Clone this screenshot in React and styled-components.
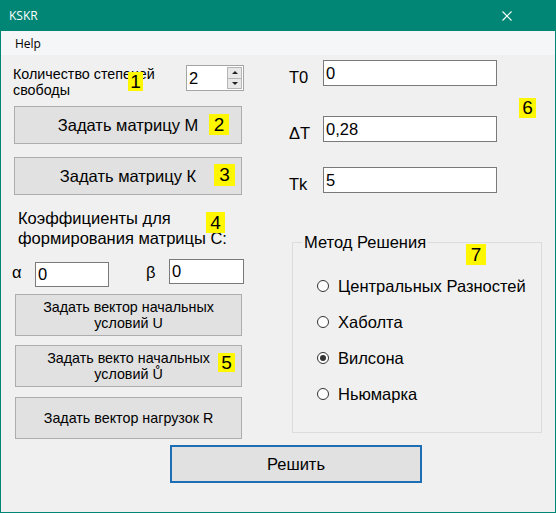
import React from 'react';
import styled, { createGlobalStyle } from 'styled-components';

const GlobalStyle = createGlobalStyle`
  html, body { margin: 0; padding: 0; background: #f0f0f0; }
  body { font-family: "Liberation Sans", Arial, sans-serif; color: #000; }
`;

const Window = styled.div`
  position: relative;
  width: 556px;
  height: 513px;
  box-sizing: border-box;
  border: 1px solid #018574;
  border-top: none;
  background: #f0f0f0;
  display: flex;
  flex-direction: column;
  overflow: hidden;
`;

const TitleBar = styled.div`
  height: 31px;
  flex: none;
  background: #018574;
  color: #fff;
  display: flex;
  align-items: center;
  justify-content: space-between;
  padding: 0 43px 0 8px;
  font-family: "Open Sans", "Noto Sans", sans-serif;
  font-size: 12px;
`;

const MenuBar = styled.div`
  height: 24px;
  flex: none;
  background: #f5f6f7;
  display: flex;
  align-items: center;
  padding-left: 14px;
  font-family: "Open Sans", "Noto Sans", sans-serif;
  font-size: 12px;
`;

const Body = styled.div`
  display: grid;
  grid-template-columns: 232px 253px;
  column-gap: 45px;
  align-items: start;
  padding-left: 11px;
`;

const Column = styled.div`
  display: flex;
  flex-direction: column;
  align-items: flex-start;
`;

const DofRow = styled.div`
  display: flex;
  align-items: flex-start;
  margin-top: 10px;
`;

const SmallLabel = styled.div`
  width: 173px;
  margin: 1px 0 0 1px;
  font-size: 14.3px;
  line-height: 16px;
  white-space: nowrap;
`;

const Spin = styled.div`
  width: 58px;
  height: 26px;
  box-sizing: border-box;
  border: 1px solid #a5a5a5;
  background: #fff;
  display: flex;
  font-size: 16.5px;
`;

const SpinValue = styled.div`
  flex: 1;
  padding: 3px 0 0 2px;
`;

const SpinButtons = styled.div`
  width: 15px;
  display: flex;
  flex-direction: column;
  margin: 1px 1px 1px 0;
`;

const SpinHalf = styled.div`
  flex: 1;
  background: #e8e8e8;
  border: 1px solid #b5b5b5;
  ${p => p.$down ? 'border-top: none;' : ''}
  display: flex;
  align-items: center;
  justify-content: center;
  &::after {
    content: '';
    border-left: 3px solid transparent;
    border-right: 3px solid transparent;
    ${p => p.$down ? 'border-top: 3px solid #222;' : 'border-bottom: 3px solid #222;'}
  }
`;

const ActionButton = styled.button`
  width: ${p => p.$w}px;
  height: ${p => p.$h}px;
  margin: ${p => p.$mt}px 0 0 ${p => p.$ml}px;
  box-sizing: border-box;
  border: 1px solid #adadad;
  background: #e1e1e1;
  color: #000;
  font-family: inherit;
  font-size: ${p => p.$small ? 14.3 : 16.5}px;
  line-height: ${p => p.$small ? 16 : 20}px;
  padding: 0;
  display: flex;
  align-items: center;
  justify-content: center;
  text-align: center;
`;

const BigLabel = styled.div`
  margin: 13px 0 0 6px;
  font-size: 16.5px;
  line-height: 20px;
  white-space: nowrap;
`;

const CoefRow = styled.div`
  display: flex;
  align-items: flex-start;
  margin-top: 11px;
`;

const Greek = styled.div`
  width: 23px;
  margin: 3px 0 0 ${p => p.$ml}px;
  font-size: 16.5px;
  line-height: 20px;
`;

const TextBox = styled.input`
  width: ${p => p.$w}px;
  height: ${p => p.$h}px;
  margin-top: ${p => p.$mt || 0}px;
  box-sizing: border-box;
  border: 1px solid #7a7a7a;
  background: #fff;
  padding: 0 2px;
  font-family: inherit;
  font-size: 16.5px;
  color: #000;
  outline: none;
`;

const FieldRow = styled.div`
  display: flex;
  align-items: flex-start;
  margin-top: ${p => p.$mt}px;
`;

const FieldLabel = styled.div`
  width: 34px;
  padding-top: 8px;
  font-size: 16.5px;
  line-height: 18px;
`;

const Group = styled.fieldset`
  width: 250px;
  box-sizing: border-box;
  margin: 39px 0 0 3px;
  padding: 0 0 28px 0;
  border: 1px solid #dcdcdc;
`;

const GroupTitle = styled.legend`
  margin-left: 9px;
  padding: 0 2px;
  font-size: 16.5px;
  line-height: 20px;
`;

const RadioList = styled.div`
  display: flex;
  flex-direction: column;
  gap: 16px;
  margin-top: 24px;
  padding-left: 24px;
`;

const RadioRow = styled.label`
  display: flex;
  align-items: center;
  gap: 9px;
  height: 20px;
  font-size: 16.5px;
  white-space: nowrap;
`;

const RadioDot = styled.span`
  width: 12px;
  height: 12px;
  flex: none;
  box-sizing: border-box;
  border-radius: 50%;
  border: 1px solid #333;
  background: #fff;
  display: flex;
  align-items: center;
  justify-content: center;
  &::after {
    content: '';
    width: 6px;
    height: 6px;
    border-radius: 50%;
    background: ${p => p.$on ? '#333' : 'transparent'};
  }
`;

const SolveButton = styled.button`
  grid-column: 1 / -1;
  width: 252px;
  height: 38px;
  margin: 6px 0 0 158px;
  box-sizing: border-box;
  border: 2px solid #1e6eb4;
  background: #e1e1e1;
  color: #000;
  font-family: inherit;
  font-size: 16.5px;
  padding: 0;
`;

const Note = styled.span`
  position: absolute;
  left: ${p => p.$x - 1}px;
  top: ${p => p.$y}px;
  width: ${p => p.$w}px;
  height: ${p => p.$h}px;
  background: #fff700;
  font-size: 19px;
  line-height: ${p => p.$h}px;
  text-align: center;
`;

const notes = [
  { n: 1, x: 128, y: 72, w: 15, h: 19 },
  { n: 2, x: 209, y: 114, w: 20, h: 21 },
  { n: 3, x: 214, y: 164, w: 21, h: 22 },
  { n: 4, x: 206, y: 212, w: 19, h: 21 },
  { n: 5, x: 218, y: 353, w: 17, h: 19 },
  { n: 6, x: 519, y: 98, w: 17, h: 20 },
  { n: 7, x: 466, y: 244, w: 20, h: 21 },
];

const methods = ['Центральных Разностей', 'Хаболта', 'Вилсона', 'Ньюмарка'];

export default function App() {
  return (
    <>
      <GlobalStyle />
      <Window>
        <TitleBar>
          <span>KSKR</span>
          <svg width="10" height="10" viewBox="0 0 10 10">
            <path d="M0.5 0.5 L9.5 9.5 M9.5 0.5 L0.5 9.5" stroke="#fff" strokeWidth="1.1" />
          </svg>
        </TitleBar>
        <MenuBar>Help</MenuBar>
        <Body>
          <Column>
            <DofRow>
              <SmallLabel>Количество степеней<br />свободы</SmallLabel>
              <Spin>
                <SpinValue>2</SpinValue>
                <SpinButtons>
                  <SpinHalf />
                  <SpinHalf $down />
                </SpinButtons>
              </Spin>
            </DofRow>
            <ActionButton $w={228} $h={38} $mt={8} $ml={2}>Задать матрицу М</ActionButton>
            <ActionButton $w={228} $h={38} $mt={13} $ml={2}>Задать матрицу К</ActionButton>
            <BigLabel>Коэффициенты для<br />формирования матрицы C:</BigLabel>
            <CoefRow>
              <Greek $ml={0}>α</Greek>
              <TextBox $w={74} $h={25} $mt={3} defaultValue="0" />
              <Greek $ml={37}>β</Greek>
              <TextBox $w={75} $h={25} defaultValue="0" />
            </CoefRow>
            <ActionButton $small $w={227} $h={42} $mt={7} $ml={3}>Задать вектор начальных<br />условий U</ActionButton>
            <ActionButton $small $w={227} $h={42} $mt={9} $ml={3}>Задать векто начальных<br />условий Ů</ActionButton>
            <ActionButton $small $w={227} $h={42} $mt={10} $ml={3}>Задать вектор нагрузок R</ActionButton>
          </Column>
          <Column>
            <FieldRow $mt={5}>
              <FieldLabel>T0</FieldLabel>
              <TextBox $w={174} $h={26} defaultValue="0" />
            </FieldRow>
            <FieldRow $mt={30}>
              <FieldLabel>ΔT</FieldLabel>
              <TextBox $w={174} $h={26} defaultValue="0,28" />
            </FieldRow>
            <FieldRow $mt={25}>
              <FieldLabel>Tk</FieldLabel>
              <TextBox $w={174} $h={26} defaultValue="5" />
            </FieldRow>
            <Group>
              <GroupTitle>Метод Решения</GroupTitle>
              <RadioList>
                {methods.map(m => (
                  <RadioRow key={m}>
                    <RadioDot $on={m === 'Вилсона'} />
                    {m}
                  </RadioRow>
                ))}
              </RadioList>
            </Group>
          </Column>
          <SolveButton>Решить</SolveButton>
        </Body>
        {notes.map(n => (
          <Note key={n.n} $x={n.x} $y={n.y} $w={n.w} $h={n.h}>{n.n}</Note>
        ))}
      </Window>
    </>
  );
}
